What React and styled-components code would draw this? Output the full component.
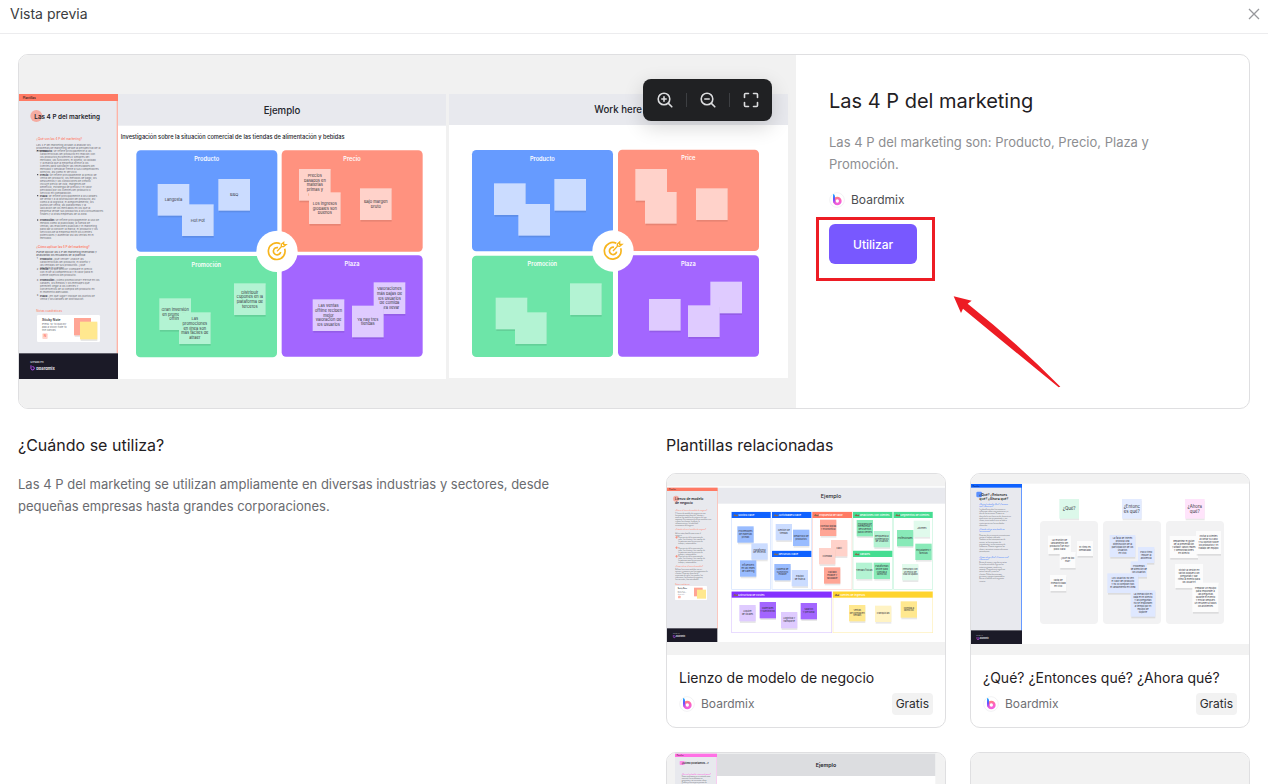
import React, { useId } from "react";
import styled, { createGlobalStyle } from "styled-components";

const Global = createGlobalStyle`
  *, *::before, *::after { box-sizing: border-box; }
  body { margin: 0; background: #fff; color: #1f2023; font-family: Inter, "Liberation Sans", sans-serif; }
  h1, h2, h3, p { margin: 0; font-weight: 400; }
  button { font: inherit; border: 0; padding: 0; cursor: pointer; }
  a { color: inherit; text-decoration: none; }
`;

/* ---------- Page shell ---------- */

const Page = styled.div`
  display: flex;
  flex-direction: column;
  height: 100vh;
  overflow: hidden;
`;

const TopBar = styled.header`
  display: flex;
  flex: none;
  align-items: center;
  justify-content: space-between;
  padding: 2px 8px 7px 10px;
  border-bottom: 1px solid #ececee;
`;

const TopTitle = styled.h1`
  font-size: 14px;
  line-height: 20px;
  color: #3b3c40;
`;

const CloseButton = styled.button`
  display: flex;
  padding: 6px;
  margin-right: -6px;
  background: none;
  color: #97989c;
`;

const Content = styled.main`
  flex: 1;
  min-height: 0;
  overflow-y: auto;
  scrollbar-width: none;
  padding: 20px 18px;
`;

/* ---------- Hero card ---------- */

const Hero = styled.section`
  display: grid;
  grid-template-columns: 777fr 453fr;
  border: 1px solid #dfdfe1;
  border-radius: 10px;
  overflow: hidden;
`;

const Preview = styled.div`
  position: relative;
  background: #f1f1f1;
`;

const Drawing = styled.svg`
  display: block;
  width: 100%;
  height: auto;
`;

const ZoomBar = styled.div`
  position: absolute;
  top: 24px;
  right: 24px;
  display: flex;
  height: 42px;
  border-radius: 8px;
  background: #202123;
  box-shadow: 0 6px 20px rgba(0, 0, 0, 0.16);
`;

const ZoomButton = styled.button`
  display: flex;
  align-items: center;
  justify-content: center;
  width: 43px;
  background: none;
  color: #dcdddf;
  & + &::before {
    content: "";
    width: 1px;
    height: 14px;
    margin-right: 13px;
    margin-left: -14px;
    background: #3d3f42;
  }
`;

const Info = styled.div`
  position: relative;
  padding: 32px 33px;
`;

const InfoTitle = styled.h2`
  font-size: 20px;
  line-height: 28px;
`;

const InfoText = styled.p`
  max-width: 340px;
  margin-top: 16px;
  font-size: 13px;
  line-height: 22px;
  color: #8d8e91;
`;

const Author = styled.div`
  display: flex;
  align-items: center;
  gap: 6px;
  font-size: 12px;
  line-height: 22px;
  color: ${(p) => (p.$strong ? "#4c4d51" : "#6f7074")};
`;

const InfoAuthor = styled(Author)`
  padding: 14px 0 13px;
`;

const Callout = styled.div`
  position: relative;
  width: max-content;
  &::after {
    content: "";
    position: absolute;
    inset: -7px -18px -17px -13px;
    border: 3px solid #ed1c24;
    pointer-events: none;
  }
`;

const UseButton = styled.button`
  display: block;
  height: 40px;
  padding: 0 24px;
  border-radius: 6px;
  background: #7858ff;
  color: #fff;
  font-size: 12px;
  font-weight: 500;
`;

const Arrow = styled.svg`
  position: absolute;
  top: 240px;
  left: 157px;
`;

/* ---------- Lower area ---------- */

const Columns = styled.div`
  display: grid;
  grid-template-columns: 1fr 1fr;
  gap: 64px;
  padding-top: 24px;
`;

const SectionTitle = styled.h2`
  margin-bottom: 16px;
  font-size: 16px;
  line-height: 24px;
`;

const Body = styled.p`
  font-size: 13px;
  line-height: 22px;
  color: #6a6b6f;
`;

const Cards = styled.div`
  display: grid;
  grid-template-columns: 1fr 1fr;
  gap: 24px;
`;

const Card = styled.a`
  display: block;
  border: 1px solid #dfdfe1;
  border-radius: 10px;
  overflow: hidden;
`;

const Thumb = styled.div`
  background: #f2f2f2;
`;

const CardBody = styled.div`
  display: grid;
  gap: 4px;
  padding: 12px;
`;

const CardTitle = styled.h3`
  font-size: 14px;
  line-height: 22px;
`;

const CardRow = styled.div`
  display: flex;
  justify-content: space-between;
`;

const Price = styled.span`
  padding: 0 4px;
  border-radius: 4px;
  background: #f2f2f2;
  font-size: 12px;
  line-height: 22px;
  color: #2c2d30;
`;

/* ---------- Icons ---------- */

function Logo() {
  const id = useId();
  return (
    <svg width="16" height="16" viewBox="0 0 48 48" aria-hidden="true">
      <defs>
        <linearGradient id={`${id}ring`} gradientUnits="userSpaceOnUse" x1="18" y1="14" x2="26" y2="38">
          <stop offset="0" stopColor="#ff8a6b" />
          <stop offset="0.5" stopColor="#ff62b8" />
          <stop offset="1" stopColor="#f25fe0" />
        </linearGradient>
        <linearGradient id={`${id}stem`} gradientUnits="userSpaceOnUse" x1="15" y1="6" x2="17" y2="36">
          <stop offset="0" stopColor="#12b4ff" />
          <stop offset="0.5" stopColor="#6a4dff" />
          <stop offset="1" stopColor="#e85fe8" />
        </linearGradient>
      </defs>
      <circle cx="24" cy="24" r="22" fill="#fff" stroke="#ececee" strokeWidth="2" />
      <circle cx="25" cy="27" r="9" fill="none" stroke={`url(#${id}ring)`} strokeWidth="8" />
      <path d="M12 6Q18 7 18 13V24Q18 33 22 38Q12 34 12 26Z" fill={`url(#${id}stem)`} />
    </svg>
  );
}

const Icon = ({ children }) => (
  <svg width="16" height="16" viewBox="0 0 16 16" fill="none" stroke="currentColor" strokeWidth="1.6" strokeLinecap="round" strokeLinejoin="round" aria-hidden="true">
    {children}
  </svg>
);

/* ---------- Board drawings (three units per pixel) ---------- */

const Label = styled.text`
  font-family: Inter, "Liberation Sans", sans-serif;
  font-size: ${(p) => p.$size}px;
  font-weight: ${(p) => p.$weight || 400};
  text-anchor: ${(p) => p.$anchor || "middle"};
  dominant-baseline: central;
`;

const Lead = styled.tspan`
  font-weight: 700;
  fill: #33343c;
`;

function wrap(text, limit) {
  const lines = [];
  let line = "";
  text.split(" ").forEach((word) => {
    if (line && (line + " " + word).length > limit) {
      lines.push(line);
      line = word;
    } else {
      line = line ? line + " " + word : word;
    }
  });
  lines.push(line);
  return lines;
}

const Para = ({ x, y, lead = "", text, limit, size = 8, step = 9, fill = "#6b6c74" }) =>
  wrap(lead ? `${lead} ${text}` : text, limit).map((line, i) => (
    <Label key={i} x={x} y={y + i * step} $size={size} $anchor="start" fill={fill}>
      {i === 0 && lead ? (
        <>
          <Lead>{lead}</Lead>
          {line.slice(lead.length)}
        </>
      ) : (
        line
      )}
    </Label>
  ));

const Note = ({ x, y, w = 95, h = 95, fill, lines = [], size = 12, step = 14, color = "#33343c" }) => (
  <g>
    <rect x={x + 2} y={y + 5} width={w - 2} height={h} fill="#000" opacity="0.09" />
    <rect x={x} y={y} width={w} height={h} fill={fill} />
    {lines.map((line, i) => (
      <Label key={i} x={x + w / 2} y={y + h / 2 + Math.round((i - (lines.length - 1) / 2) * step)} $size={size} fill={color}>
        {line}
      </Label>
    ))}
  </g>
);

const Target = ({ x, y }) => (
  <g transform={`translate(${x} ${y})`} fill="none" stroke="#f7b51e" strokeWidth="5">
    <circle r="62" fill="#fff" stroke="none" />
    <path d="M10 -23A25 25 0 1 0 23 -8" />
    <path d="M3 -11A11 11 0 1 0 11 2" />
    <path d="M0 0L15 -16M13 -15V-21L20 -27V-20H27L20 -14Z" strokeWidth="4" />
  </g>
);

const quadFill = ["#669bff", "#ff927f", "#6de5a8", "#a366ff"];
const noteFill = ["#cbdcff", "#ffd2ca", "#b3f3d3", "#dfcbff"];

function Quads({ quads, notes, center }) {
  return (
    <g>
      {quads.map(([x, y, title], i) => (
        <g key={title}>
          <rect x={x} y={y} width="423" height="304" rx="13" fill={quadFill[i]} />
          <Label x={x + 211} y={y + 26} $size={17} $weight={600} fill="#fff">
            {title}
          </Label>
        </g>
      ))}
      {notes.map(([kind, x, y, ...lines], i) => (
        <Note key={i} x={x} y={y} fill={noteFill[kind]} lines={lines} />
      ))}
      <Target x={center[0]} y={center[1]} />
    </g>
  );
}

const items = [
  ["Producto:", "se refiere principalmente a las características del producto en relación con los productos existentes o similares del mercado, las funciones, el diseño, la calidad y la marca que la empresa ofrece a los clientes para satisfacer las necesidades del mercado y destacar frente a sus competidores directos, así como el servicio."],
  ["Precio:", "se refiere principalmente al precio de venta del producto, los métodos de pago, los descuentos y las condiciones de crédito. Incluye precio de lista, márgenes de beneficio, estrategia de precios y el valor percibido por los clientes del producto o servicio en comparación."],
  ["Plaza:", "se refiere principalmente a los canales de venta y a la distribución del producto, así como a la logística, el almacenamiento, los puntos de venta, las plataformas y la ubicación de los mercados en los que la empresa vende sus productos a los consumidores finales y a otras empresas de la zona."],
  ["Promoción:", "se refiere principalmente al uso de medios como la publicidad, la fuerza de ventas, las relaciones públicas y el marketing para dar a conocer la marca, el producto y los servicios de la empresa entre los clientes potenciales y aumentar así las ventas en el mercado."],
];
const itemY = [212, 284, 347, 420];

const steps = [
  ["Producto:", "¿qué vende? Analice las características del producto, el diseño y las ventajas de sus productos. ¿Qué necesita el cliente?"],
  ["Precio:", "¿a qué precio? Compare el precio con el de la competencia y el valor para el cliente objetivo del producto."],
  ["Promoción:", "¿cómo promocionar? Piense en los canales, los medios y los mensajes que permiten llegar a los clientes y convencerlos de la compra del producto en el momento adecuado."],
  ["Plaza:", "¿en qué lugar? Indique los puntos de venta y los canales de distribución."],
];
const stepY = [536, 568, 600, 647];

function HeroSidebar() {
  return (
    <g transform="translate(-27 75)">
      <rect x="27" y="42" width="297" height="855" fill="#e8e9ee" />
      <rect x="320" y="62" width="4" height="758" fill="#ffb3a6" />
      <rect x="27" y="42" width="297" height="21" fill="#ff7a64" />
      <Label x="38" y="53" $size={9} $weight={600} $anchor="start" fill="#3a2422">Plantillas</Label>
      <circle cx="79" cy="108" r="18" fill="#ff7a64" opacity="0.55" />
      <Label x="73" y="110" $size={19} $weight={600} $anchor="start" fill="#23242b">Las 4 P del marketing</Label>
      <Label x="79" y="178" $size={9} $weight={500} $anchor="start" fill="#ff7a64">¿Qué son las 4 P del marketing?</Label>
      <Para x={79} y={194} limit={50} text="Las 4 P del marketing ayudan a analizar los problemas de marketing desde la perspectiva de la empresa:" />
      {items.map(([name, text], i) => (
        <g key={name}>
          <circle cx="83" cy={itemY[i]} r="2" fill="#33343c" />
          <Para x={90} y={itemY[i]} limit={46} lead={name} text={text} />
        </g>
      ))}
      <Label x="79" y="500" $size={9} $weight={600} $anchor="start" fill="#ff7a64">¿Cómo aplicar las 4 P del marketing?</Label>
      <Para x={79} y={517} limit={50} step={9} fill="#45464e" text="Puede aplicar las 4 P del marketing rellenando y analizando los recuadros de la plantilla:" />
      {steps.map(([name, text], i) => (
        <g key={name}>
          <Label x="80" y={stepY[i]} $size={7} $anchor="start" fill="#33343c">{`${i + 1}.`}</Label>
          <Para x={90} y={stepY[i]} limit={43} lead={name} text={text} />
        </g>
      ))}
      <Label x="79" y="692" $size={9} $anchor="start" fill="#ff7a64">Notas cuadráticas</Label>
      <rect x="81" y="705" width="189" height="81" rx="4" fill="#fff" />
      <Label x="96" y="719" $size={10} $weight={600} $anchor="start" fill="#33343c">Sticky Note</Label>
      <Para x={96} y={733} limit={21} text="Press 'N' to quickly add a sticky note to the canvas" />
      <rect x="97" y="760" width="16" height="17" rx="3" fill="#ffd5cd" />
      <Label x="105" y="768" $size={10} $weight={600} fill="#ff7a64">N</Label>
      <Note x={192} y={714} w={51} h={52} fill="#ffa595" />
      <Note x={210} y={725} w={52} h={53} fill="#ffe88f" />
      <rect x="27" y="820" width="297" height="77" fill="#1b1a27" />
      <Label x="61" y="847" $size={8} $weight={600} $anchor="start" fill="#d8d8dd">Creado en</Label>
      <path d="M63 856V866A5 5 0 1 0 67 860" fill="none" stroke="#b04cf0" strokeWidth="3" />
      <Label x="79" y="864" $size={12} $weight={700} $anchor="start" fill="#e6e6ea">boardmix</Label>
    </g>
  );
}

function HeroBoard() {
  return (
    <Drawing viewBox="0 0 2331 1059" role="img" aria-label="Las 4 P del marketing">
      <g transform="translate(291 105)">
        <rect x="6" y="12" width="984" height="855" fill="#fff" />
        <rect x="6" y="12" width="984" height="95" fill="#e8e9ee" />
        <Label x="498" y="60" $size={29} $weight={500} fill="#23242b">Ejemplo</Label>
        <Label x="14" y="142" $size={17} $weight={500} $anchor="start" fill="#23242b">
          Investigación sobre la situación comercial de las tiendas de alimentación y bebidas
        </Label>
        <Quads
          center={[483, 484]}
          quads={[[61, 181, "Producto"], [497, 181, "Precio"], [60, 498, "Promoción"], [497, 496, "Plaza"]]}
          notes={[
            [0, 125, 282, "Langosta"],
            [0, 198, 343, "Hot Pot"],
            [0, 307, 267, "BBQ"],
            [1, 549, 237, "Precios", "basados en", "materias", "primas y", "costes"],
            [1, 579, 307, "Los ingresos", "globales son", "buenos"],
            [1, 732, 295, "Bajo margen", "bruto"],
            [2, 130, 625, "Gran inversión", "en promoción", "offline"],
            [2, 189, 667, "Las", "promociones", "en línea son", "más fáciles de", "atraer"],
            [2, 354, 580, "Distribuir", "cupones en la", "plataforma de", "terceros"],
            [3, 590, 628, "Las ventas", "offline reciben", "mejor", "valoración de", "los usuarios"],
            [3, 773, 577, "Valoraciones", "más bajas de", "los usuarios", "de comida", "para llevar"],
            [3, 708, 647, "Ya hay tres", "tiendas"],
          ]}
        />
      </g>
      <g transform="translate(1263 45)">
        <rect x="27" y="72" width="1017" height="852" fill="#fff" />
        <rect x="27" y="72" width="1017" height="93" fill="#e8e9ee" />
        <Label x="463" y="119" $size={29} $weight={500} $anchor="start" fill="#23242b">Work here</Label>
        <Quads
          center={[519, 543]}
          quads={[[96, 240, "Producto"], [534, 239, "Price"], [96, 557, "Promoción"], [534, 556, "Plaza"]]}
          notes={[
            [0, 162, 340], [0, 235, 402], [0, 343, 327],
            [1, 586, 297], [1, 615, 366], [1, 768, 355],
            [2, 167, 683], [2, 225, 727], [2, 390, 640],
            [3, 627, 687], [3, 811, 635], [3, 744, 706],
          ]}
        />
      </g>
      <HeroSidebar />
    </Drawing>
  );
}

const canvasBoxes = [
  [20, 96, 117, 232, "#0f62ff", "#cfe0ff", "Socios clave"],
  [141, 96, 118, 116, "#0f62ff", "#cfe0ff", "Actividades clave"],
  [141, 213, 118, 115, "#0f62ff", "#cfe0ff", "Recursos clave"],
  [262, 96, 119, 232, "#ff7a64", "#ffd2ca", "Propuesta de valor"],
  [384, 96, 118, 116, "#45dd92", "#c6f5dd", "Relaciones con clientes"],
  [384, 213, 118, 115, "#45dd92", "#c6f5dd", "Canales"],
  [506, 96, 117, 232, "#45dd92", "#c6f5dd", "Segmentos de clientes"],
  [20, 335, 300, 123, "#8430ff", "#dfcbff", "Estructura de costes"],
  [324, 335, 299, 123, "#ffd42e", "#fff0b8", "Fuentes de ingresos"],
];

const canvasNotes = [
  [37, 139, "#99bcff", "Proveedores", "de materias", "primas"],
  [79, 190, "#cbdcff", "Plataforma", "de terceros"],
  [45, 241, "#99bcff", "Influencers", "en las redes", "de catering"],
  [152, 132, "#cbdcff", "Gestión de", "tiendas"],
  [204, 149, "#99bcff", "Desarrollo de", "productos"],
  [148, 252, "#99bcff", "Cadena de", "suministro", "estable"],
  [200, 270, "#cbdcff", "Equipo", "de marca"],
  [285, 119, "#ffa595", "Comida rápida", "y económica"],
  [318, 180, "#ffd2ca", "Fácil"],
  [282, 204, "#ffd2ca", "Cómoda"],
  [297, 262, "#ffa595", "Calidad", "estable y", "saludable"],
  [395, 120, "#88eab8", "Programa de", "membresía y", "descuentos", "para clientes"],
  [446, 153, "#b3f3d3", "Respuesta a", "comentarios", "de usuarios"],
  [393, 248, "#b3f3d3", "Tiendas físicas"],
  [446, 248, "#88eab8", "Plataformas", "online para", "comida a", "domicilio"],
  [566, 122, "#e0faec", "Jóvenes"],
  [516, 150, "#88eab8", "Profesionales"],
  [571, 191, "#88eab8", "Estudiantes y", "familias"],
  [531, 252, "#e0faec", "Personas con", "un estilo de", "vida ocupado"],
  [43, 375, "#dfcbff", "Alquiler", "de locales"],
  [104, 366, "#a366ff", "Materiales", "y suministros"],
  [168, 396, "#dfcbff", "Logística y", "transporte"],
  [227, 369, "#a366ff", "Salarios", "y personal"],
  [372, 375, "#ffe88f", "Ventas", "de comida en", "tiendas"],
  [450, 377, "#fff3c4", "Franquicias"],
  [527, 364, "#ffe88f", "Comida a", "domicilio"],
];

function CanvasBoard() {
  return (
    <Drawing viewBox="0 0 834 543" role="img" aria-label="Lienzo de modelo de negocio">
      <rect x="0" y="37" width="834" height="467" fill="#fff" />
      <rect x="153" y="41" width="681" height="48" fill="#e8e9ee" />
      <g transform="translate(174 18)">
        <Label x="318" y="47" $size={16} $weight={500} fill="#23242b">Ejemplo</Label>
        {canvasBoxes.map(([x, y, w, h, head, line, title]) => (
          <g key={title}>
            <rect x={x} y={y} width={w} height={h} fill="#fff" stroke={line} strokeWidth="2" />
            <rect x={x} y={y} width={w} height="18" fill={head} />
            <path d={`M${x + 5} ${y + 12}l4 -6 5 4 5 -3v6z`} fill="#8a6a4c" />
            <Label x={x + 20} y={y + 9} $size={8} $weight={500} $anchor="start" fill="#fff">{title}</Label>
          </g>
        ))}
        {canvasNotes.map(([x, y, fill, ...lines], i) => (
          <Note key={i} x={x} y={y} w={49} h={49} fill={fill} lines={lines} size={7} step={8} />
        ))}
      </g>
      <g transform="translate(-21 -12)">
        <rect x="21" y="53" width="152" height="424" fill="#e8e9ee" />
        <rect x="171" y="62" width="2" height="414" fill="#ffb3a6" />
        <rect x="21" y="53" width="152" height="10" fill="#ff7a64" />
        <Label x="27" y="58" $size={5} $anchor="start" fill="#3a2422">Plantillas</Label>
        <circle cx="48" cy="86" r="9" fill="#ff7a64" opacity="0.55" />
        <Label x="45" y="86" $size={10} $weight={600} $anchor="start" fill="#23242b">Lienzo de modelo</Label>
        <Label x="45" y="98" $size={10} $weight={600} $anchor="start" fill="#23242b">de negocio</Label>
        <Label x="46" y="121" $size={5} $anchor="start" fill="#ff7a64">¿Qué es el lienzo de modelo de negocio?</Label>
        <Para x={46} y={130} limit={40} size={5} step={6} text="El lienzo de modelo de negocio es una herramienta para describir, diseñar y analizar los modelos de negocio de una empresa. Se compone de nueve módulos que cubren los clientes, la oferta, la infraestructura y la viabilidad económica del negocio." />
        <Label x="46" y="178" $size={5} $anchor="start" fill="#ff7a64">¿Cuándo utilizar el modelo de negocio?</Label>
        <Para x={46} y={188} limit={38} size={5} step={7} text="Utilice esta plantilla para crear el negocio." />
        {[202, 233, 259].map((y) => (
          <g key={y}>
            <path d={`M46 ${y}h7m-3 -4v8`} stroke="#ff7a64" strokeWidth="2" />
            <Para x={55} y={y} limit={36} size={5} step={6} text="Descripción de la propuesta de valor, los clientes y los canales de la empresa para los equipos de trabajo y responsables." />
          </g>
        ))}
        <Label x="46" y="287" $size={5} $anchor="start" fill="#ff7a64">¿Cómo utilizar el lienzo de modelo?</Label>
        <Para x={46} y={296} limit={38} size={5} step={6} text="Rellene los nueve módulos con su equipo y comience por los segmentos de clientes. Después describa la propuesta de valor, los canales, las relaciones, las fuentes de ingresos, los recursos y las actividades." />
        <Label x="46" y="343" $size={5} $anchor="start" fill="#ff7a64">Notas cuadráticas</Label>
        <rect x="45" y="348" width="96" height="42" rx="2" fill="#fff" />
        <Label x="53" y="355" $size={5} $weight={600} $anchor="start" fill="#33343c">Sticky Note</Label>
        <Para x={53} y={363} limit={18} size={4} step={5} text="Press 'N' to quickly add a sticky note" />
        <rect x="54" y="377" width="8" height="8" rx="2" fill="#ffb3a6" />
        <rect x="102" y="353" width="26" height="26" fill="#ffa595" />
        <rect x="111" y="359" width="27" height="27" fill="#ffe88f" />
        <rect x="21" y="475" width="151" height="41" fill="#1b1a27" />
        <Label x="39" y="490" $size={4} $anchor="start" fill="#d8d8dd">Creado en</Label>
        <path d="M40 495V500A3 3 0 1 0 43 497" fill="none" stroke="#b04cf0" strokeWidth="2" />
        <Label x="48" y="499" $size={6} $weight={600} $anchor="start" fill="#e6e6ea">boardmix</Label>
      </g>
    </Drawing>
  );
}

const whatNotes = [
  [249, 197, 69, 55, "#fcfcfc", "La reunión de", "lanzamiento del", "producto fue muy", "poco clara"],
  [336, 213, 48, 45, "#fcfcfc", "El ritmo es", "demasiado"],
  [284, 246, 48, 48, "#fcfcfc", "¿Qué ha ido", "mal?"],
  [255, 315, 49, 48, "#fcfcfc", "Falta de", "interactividad", "en vivo"],
  [434, 195, 77, 66, "#dfe8ff", "La falta de interés", "provoca una", "disminución de la", "participación de los", "usuarios", "en vivo"],
  [519, 231, 49, 48, "#dfe8ff", "Poco ritmo", "reduce la", "asistencia"],
  [497, 274, 49, 47, "#dfe8ff", "Problemas", "de atención de", "los usuarios"],
  [427, 310, 93, 59, "#dfe8ff", "Los usuarios no ven", "el valor del producto", "y no lo compran tras", "el lanzamiento en línea"],
  [497, 361, 74, 79, "#dfe8ff", "La interacción es", "baja en el directo", "y las preguntas", "no se responden", "a tiempo por el", "equipo de", "soporte"],
  [614, 198, 85, 66, "#fcfcfc", "Replantear el guion", "de la presentación", "y añadir casos reales", "y demostraciones", "en directo"],
  [693, 183, 75, 69, "#fcfcfc", "Invitar a clientes", "a contar su caso", "y su opinión sobre", "los productos y el", "trabajo del equipo"],
  [630, 282, 84, 72, "#fcfcfc", "Dividir la sesión en", "varios bloques con", "preguntas y dar", "ritmo al evento para", "los usuarios"],
  [682, 338, 79, 88, "#fcfcfc", "Preparar un equipo", "para responder a", "las preguntas", "durante el evento", "y enviar después", "un resumen a todos", "los asistentes"],
];

function WhatBoard() {
  return (
    <Drawing viewBox="0 0 834 543" role="img" aria-label="¿Qué? ¿Entonces qué? ¿Ahora qué?">
      <g transform="translate(-18 -12)">
        <rect x="18" y="41" width="834" height="481" fill="#fff" />
        {[225, 414, 603].map((x) => (
          <rect key={x} x={x} y="153" width="174" height="309" rx="12" fill="#f2f2f3" />
        ))}
        <Note x={283} y={87} w={59} h={59} fill="#dcf8ea" size={13} lines={["¿Qué?"]} />
        <Note x={471} y={87} w={59} h={59} fill="#e3ebff" size={13} step={14} lines={["¿Entonc", "es qué?"]} />
        <Note x={660} y={87} w={59} h={59} fill="#ffe4fb" size={13} step={14} lines={["¿Ahora", "qué?"]} />
        {whatNotes.map(([x, y, w, h, fill, ...lines], i) => (
          <Note key={i} x={x} y={y} w={w} h={h} fill={fill} lines={lines} size={7} step={9} />
        ))}
        <rect x="18" y="41" width="152" height="440" fill="#e8e9ee" />
        <rect x="168" y="50" width="3" height="432" fill="#6699ff" />
        <rect x="18" y="42" width="153" height="11" fill="#0f62ff" />
        <Label x="23" y="47" $size={5} $anchor="start" fill="#0b2050">Plantillas</Label>
        <rect x="34" y="65" width="17" height="17" rx="4" fill="#5b90ff" />
        <Label x="43" y="75" $size={10} $weight={600} $anchor="start" fill="#23242b">¿Qué? ¿Entonces</Label>
        <Label x="43" y="88" $size={10} $weight={600} $anchor="start" fill="#23242b">qué? ¿Ahora qué?</Label>
        <Para x={43} y={102} limit={36} size={5} step={6} fill="#2f74ff" text="¿Qué es la plantilla ¿Qué? ¿Entonces qué? ¿Ahora qué?" />
        <Para x={43} y={116} limit={40} size={5} step={7} text="La plantilla ayuda a los equipos a reflexionar sobre una experiencia y a decidir las acciones. Primero se describe lo que ha ocurrido, después se analiza por qué es importante y, por último, se acuerda lo que se hará a continuación con los resultados obtenidos." />
        <Para x={43} y={178} limit={36} size={5} step={6} fill="#2f74ff" text="¿Cuándo utilizar esta plantilla en las reuniones?" />
        <Para x={43} y={194} limit={36} size={5} step={7} text="Después de un proyecto o evento para revisar el trabajo realizado. También en las retrospectivas de equipo, en las reuniones de seguimiento y en las sesiones de formación. Permite organizar las ideas y encontrar nuevas soluciones para mejorar." />
        <Para x={43} y={261} limit={38} size={5} step={6} fill="#2f74ff" text="¿Cómo utilizar ¿Qué? ¿Entonces qué? ¿Ahora qué?" />
        <Para x={43} y={276} limit={34} size={5} step={7} text="Reúna al equipo y escriba en notas lo que ha sucedido. Agrupe las notas por temas y analice su impacto. Pregunte qué significan para el equipo y para los clientes. Defina las próximas acciones y asigne responsables. Revise el tablero en la siguiente reunión." />
        <rect x="18" y="481" width="153" height="41" fill="#1b1a27" />
        <Label x="34" y="496" $size={4} $anchor="start" fill="#d8d8dd">Creado en</Label>
        <path d="M36 501V506A3 3 0 1 0 39 503" fill="none" stroke="#d04cf0" strokeWidth="2" />
        <Label x="44" y="505" $size={6} $weight={600} $anchor="start" fill="#e6e6ea">boardmix</Label>
      </g>
    </Drawing>
  );
}

function HowBoard() {
  return (
    <Drawing viewBox="0 0 834 543" role="img" aria-label="¿Cómo podríamos...?">
      <g transform="translate(-21 -309)">
        <rect x="45" y="311" width="781" height="520" fill="#fff" />
        <rect x="171" y="311" width="655" height="67" fill="#dcdde0" />
        <rect x="45" y="311" width="126" height="520" fill="#e8e9ee" />
        <rect x="169" y="320" width="2" height="511" fill="#ffc0f3" />
        <rect x="45" y="311" width="126" height="10" fill="#ff70e5" />
        <Label x="50" y="316" $size={5} $anchor="start" fill="#3a2422">Plantillas</Label>
        <rect x="59" y="333" width="15" height="12" rx="2" fill="#ff8feb" />
        <Label x="65" y="340" $size={8} $weight={600} $anchor="start" fill="#23242b">¿Cómo podríamos...?</Label>
        <Label x="65" y="371" $size={5} $anchor="start" fill="#ff50de">¿Qué es la plantilla cómo podríamos?</Label>
        <Para x={65} y={379} limit={34} size={5} step={6} text="Cómo podríamos es un método para convertir los problemas en preguntas y así encontrar ideas. Permite a los equipos pensar de forma abierta y descubrir nuevas soluciones." />
        <Label x="498" y="345" $size={16} $weight={600} fill="#23242b">Ejemplo</Label>
      </g>
    </Drawing>
  );
}

const EmptyBoard = () => <Drawing viewBox="0 0 834 543" aria-hidden="true" />;

const related = [
  { title: "Lienzo de modelo de negocio", Board: CanvasBoard },
  { title: "¿Qué? ¿Entonces qué? ¿Ahora qué?", Board: WhatBoard },
  { title: "¿Cómo podríamos...?", Board: HowBoard },
  { title: "Boardmix", Board: EmptyBoard },
];

export default function App() {
  return (
    <Page>
      <Global />
      <TopBar>
        <TopTitle>Vista previa</TopTitle>
        <CloseButton aria-label="Cerrar">
          <svg width="12" height="12" viewBox="0 0 12 12" stroke="currentColor" strokeWidth="1.3" aria-hidden="true">
            <path d="M1 1l10 10M11 1L1 11" />
          </svg>
        </CloseButton>
      </TopBar>
      <Content>
        <Hero>
          <Preview>
            <HeroBoard />
            <ZoomBar>
              <ZoomButton aria-label="Acercar">
                <Icon>
                  <circle cx="7" cy="7" r="5.8" />
                  <path d="M11.4 11.4l3.4 3.4M7 4.8v4.4M4.8 7h4.4" />
                </Icon>
              </ZoomButton>
              <ZoomButton aria-label="Alejar">
                <Icon>
                  <circle cx="7" cy="7" r="5.8" />
                  <path d="M11.4 11.4l3.4 3.4M4.8 7h4.4" />
                </Icon>
              </ZoomButton>
              <ZoomButton aria-label="Pantalla completa">
                <Icon>
                  <path d="M1.5 5.5v-3q0-1 1-1h3M10.5 1.5h3q1 0 1 1v3M14.5 10.5v3q0 1-1 1h-3M5.5 14.5h-3q-1 0-1-1v-3" />
                </Icon>
              </ZoomButton>
            </ZoomBar>
          </Preview>
          <Info>
            <InfoTitle>Las 4 P del marketing</InfoTitle>
            <InfoText>Las 4 P del marketing son: Producto, Precio, Plaza y Promoción.</InfoText>
            <InfoAuthor $strong>
              <Logo />
              Boardmix
            </InfoAuthor>
            <Callout>
              <UseButton>Utilizar</UseButton>
            </Callout>
            <Arrow width="108" height="93" viewBox="0 0 324 279" aria-hidden="true">
              <path d="M2 4L56 17L44 26Q190 142 322 275L317 277Q180 165 30 41L24 54Z" fill="#ed1c24" />
            </Arrow>
          </Info>
        </Hero>
        <Columns>
          <section>
            <SectionTitle>¿Cuándo se utiliza?</SectionTitle>
            <Body>
              Las 4 P del marketing se utilizan ampliamente en diversas industrias y sectores, desde pequeñas empresas hasta
              grandes corporaciones.
            </Body>
          </section>
          <section>
            <SectionTitle>Plantillas relacionadas</SectionTitle>
            <Cards>
              {related.map(({ title, Board }) => (
                <Card key={title} href="#">
                  <Thumb>
                    <Board />
                  </Thumb>
                  <CardBody>
                    <CardTitle>{title}</CardTitle>
                    <CardRow>
                      <Author>
                        <Logo />
                        Boardmix
                      </Author>
                      <Price>Gratis</Price>
                    </CardRow>
                  </CardBody>
                </Card>
              ))}
            </Cards>
          </section>
        </Columns>
      </Content>
    </Page>
  );
}
